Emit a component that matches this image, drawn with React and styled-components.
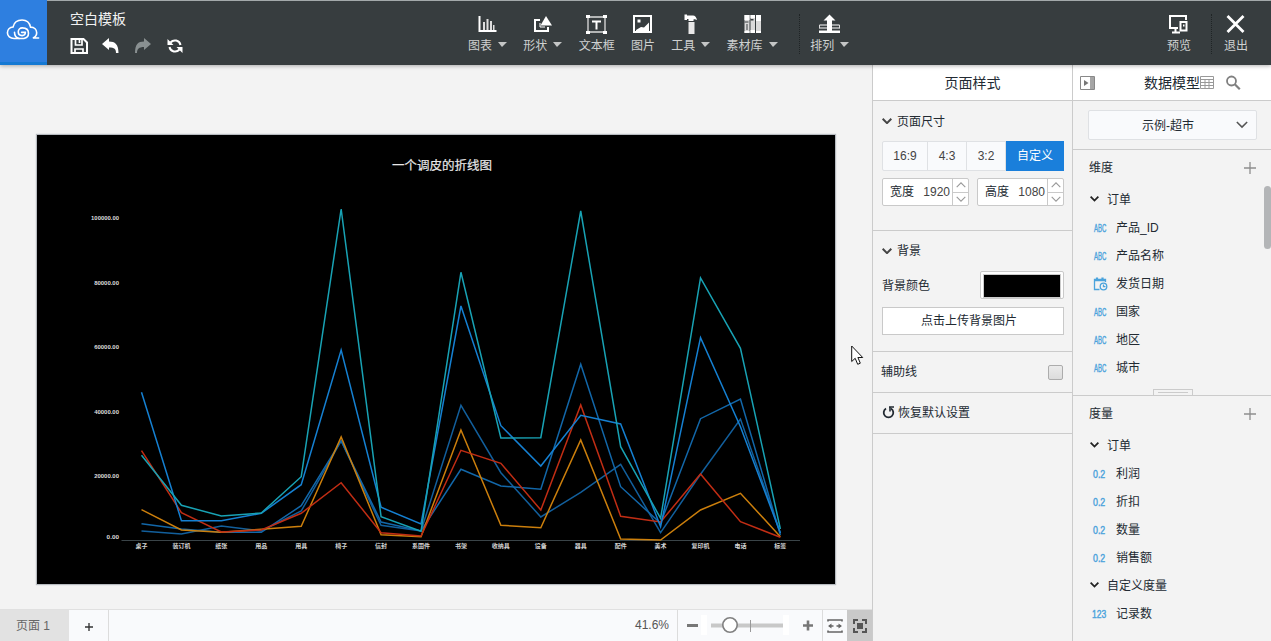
import React from "react";
import styled, { createGlobalStyle } from "styled-components";

const GlobalStyle = createGlobalStyle`
  * {
    box-sizing: border-box;
  }
  body {
    margin: 0;
    overflow: hidden;
    font-family: "Liberation Sans", "Noto Sans CJK SC", sans-serif;
    font-size: 12px;
    color: #222a32;
  }
  svg {
    display: block;
    flex: none;
  }
`;

// Layout
const Page = styled.div`
  display: flex;
  flex-direction: column;
  width: 1271px;
  height: 641px;
  background-color: #f3f3f3;
`;

const Header = styled.header`
  position: relative;
  z-index: 2;
  display: flex;
  flex: none;
  height: 65px;
  background-color: #373d3f;
  border-top: 1px solid #a3a9aa;
  box-shadow: 0 1px 4px rgba(0, 0, 0, 0.3);
`;

const Logo = styled.div`
  display: flex;
  align-items: center;
  justify-content: center;
  width: 47px;
  height: 65px;
  margin-top: -1px;
  padding: 0 2px 3px 0;
  background-color: #2e7fe0;
  border-bottom: 3px solid #1579d3;
`;

const TitleBlock = styled.div`
  width: 421px;
  padding: 8px 0 0 23px;
`;

const Title = styled.div`
  height: 20px;
  line-height: 20px;
  font-size: 14px;
  color: #f2f2f2;
`;

const QuickActions = styled.div`
  display: flex;
  gap: 14px;
  margin-top: 8px;
`;

const Toolbar = styled.nav`
  display: flex;
  flex: 1;
  gap: 16.3px;
  padding-top: 13px;
`;

const Tool = styled.div`
  display: flex;
  flex-direction: column;
  align-items: center;
  height: 40px;
`;

const ToolLabel = styled.div`
  display: flex;
  align-items: center;
  gap: 6px;
  height: 18px;
  margin-top: 3px;
  line-height: 18px;
  color: #cfd1d1;
  white-space: nowrap;
`;

const Caret = styled.span`
  border: 5px solid transparent;
  border-left-width: 4px;
  border-top-color: #c4c6c6;
  border-bottom: 0;
  margin-bottom: 4px;
`;

const Separator = styled.div`
  height: 40px;
  border-left: 1px dotted #1f2425;
  margin: 0 ${(p) => p.$right || 0}px 0 ${(p) => p.$left || 0}px;
`;

const HeaderRight = styled.div`
  display: flex;
  padding: 13px 23px 0 0;
`;

const Main = styled.main`
  display: flex;
  flex: 1;
  min-height: 0;
`;

const Workspace = styled.section`
  display: flex;
  flex-direction: column;
  width: 872px;
`;

const Stage = styled.div`
  flex: 1;
  padding: 70px 0 0 37px;
`;

const Canvas = styled.div`
  width: 798px;
  height: 449px;
  background-color: #000;
  box-shadow: 0 0 1px 1px rgba(110, 120, 130, 0.45);
`;

const Pointer = styled.div`
  position: absolute;
  left: 851px;
  top: 345px;
`;

// Footer
const Footer = styled.footer`
  display: flex;
  flex: none;
  height: 32px;
  border-top: 1px solid #e0e0e0;
  background-color: #f9fafc;
`;

const PageTab = styled.div`
  width: 69px;
  padding-left: 16px;
  line-height: 32px;
  background-color: #e2e2e2;
  color: #666;
`;

const AddTab = styled.div`
  display: flex;
  align-items: center;
  justify-content: center;
  width: 40px;
  padding-top: 3px;
  border-right: 1px solid #dcdcdc;
`;

const ZoomText = styled.div`
  margin-left: auto;
  padding-right: 8px;
  line-height: 31px;
  color: #555;
`;

const ZoomControl = styled.div`
  display: flex;
  align-items: center;
  width: 146px;
  border: 1px solid #dcdcdc;
  border-width: 0 1px;
`;

const FooterButton = styled.div`
  display: flex;
  align-items: center;
  justify-content: center;
  width: ${(p) => p.$width}px;
  background-color: ${(p) => (p.$active ? "#c9c9c9" : "transparent")};
`;

// Side panels
const Panel = styled.aside`
  position: relative;
  width: ${(p) => p.$width}px;
  border-left: 1px solid #cbcbcb;
`;

const PanelHeader = styled.div`
  display: flex;
  align-items: center;
  height: 36px;
  padding: ${(p) => (p.$center ? "1px 0 0" : "1px 0 0 7px")};
  justify-content: ${(p) => (p.$center ? "center" : "flex-start")};
  background-color: #fff;
  border-bottom: 1px solid #cbcbcb;
  font-size: 14px;
`;

const Text = styled.span`
  padding-bottom: ${(p) => p.$lift || 2}px;
  white-space: nowrap;
`;

const ModelTitle = styled(Text)`
  margin: 0 0 0 49px;
`;

const Group = styled.div`
  height: ${(p) => p.$height}px;
  padding: 10px 8px 0 9px;
  border-bottom: 1px solid #cbcbcb;
`;

const GroupTitle = styled.div`
  display: flex;
  align-items: center;
  gap: 5px;
  height: 20px;
`;

const RatioGroup = styled.div`
  display: flex;
  height: 30px;
  margin-top: 10px;
  border: 1px solid #dfe1e4;
  border-radius: 2px;
  background-color: #f9fafc;
`;

const Ratio = styled.div`
  width: ${(p) => p.$width}px;
  line-height: 28px;
  text-align: center;
  color: #444;
  border-right: 1px solid #dfe1e4;
  &:last-child {
    margin: -1px -1px -1px 0;
    line-height: 30px;
    border: 0;
    background-color: #1a7fdb;
    color: #fff;
  }
`;

const SizeRow = styled.div`
  display: flex;
  justify-content: space-between;
  margin-top: 7px;
`;

const SizeInput = styled.div`
  display: flex;
  width: 87px;
  height: 28px;
  padding-left: 7px;
  line-height: 26px;
  background-color: #fff;
  border: 1px solid #c9c9c9;
  border-radius: 2px;
`;

const SizeValue = styled.span`
  margin-left: auto;
  padding-right: 2px;
  color: #444;
`;

const Spinner = styled.div`
  display: flex;
  flex-direction: column;
  width: 16px;
  border-left: 1px solid #c9c9c9;
`;

const SpinButton = styled.div`
  display: flex;
  flex: 1;
  align-items: center;
  justify-content: center;
  & + & {
    border-top: 1px solid #c9c9c9;
  }
`;

const ColorRow = styled.div`
  display: flex;
  align-items: center;
  justify-content: space-between;
  height: 28px;
  margin-top: 10px;
`;

const ColorSwatch = styled.div`
  width: 84px;
  height: 28px;
  padding: 2px;
  background: #fff;
  border: 1px solid #c9c9c9;
  border-radius: 2px;
  &::before {
    content: "";
    display: block;
    height: 22px;
    background-color: #000;
    border: 1px solid #ccc;
    background-clip: padding-box;
  }
`;

const UploadButton = styled.div`
  height: 28px;
  margin-top: 8px;
  padding-right: 8px;
  line-height: 27px;
  text-align: center;
  background-color: #fff;
  border: 1px solid #c9c9c9;
`;

const OptionRow = styled.div`
  display: flex;
  align-items: center;
  gap: 3px;
  height: 41px;
  padding: 0 9px 0 ${(p) => p.$left}px;
  border-bottom: 1px solid #cbcbcb;
`;

const Checkbox = styled.div`
  width: 15px;
  height: 15px;
  margin: 1px 0 0 auto;
  border: 1px solid #acacac;
  border-radius: 2px;
  background: linear-gradient(#ebebeb, #dcdcdc);
`;

const SelectArea = styled.div`
  height: 49px;
  padding: 9px 15px 0;
  border-bottom: 1px solid #cbcbcb;
`;

const Select = styled.div`
  display: flex;
  align-items: center;
  height: 30px;
  width: 169px;
  padding: 0 8px 0 53px;
  justify-content: space-between;
  background-color: #f9fafc;
  border: 1px solid #dfe1e4;
  border-radius: 2px;
`;

const FieldList = styled.div`
  height: ${(p) => p.$height || "auto"};
  border-bottom: ${(p) => (p.$height ? "1px solid #cbcbcb" : "0")};
`;

const FieldHeader = styled.div`
  display: flex;
  align-items: center;
  justify-content: space-between;
  height: 35px;
  padding: 0 15px 0 16px;
`;

const FolderRow = styled.div`
  display: flex;
  align-items: center;
  gap: 8px;
  height: 28px;
  padding-left: 17px;
`;

const FieldRow = styled.div`
  display: flex;
  align-items: center;
  height: 28px;
  padding-left: 20px;
`;

const FieldType = styled.div`
  width: 23px;
  padding-top: 2px;
  white-space: nowrap;
  font-size: 10px;
  color: #4ba3dc;
`;

const TypeText = styled.span`
  display: inline-block;
  transform: scaleX(${(p) => p.$scale || 1});
  transform-origin: left;
  margin-left: ${(p) => p.$shift || 0}px;
  -webkit-text-stroke: 0.4px currentColor;
`;

const DragHandle = styled.div`
  width: 40px;
  height: 6px;
  margin: 8px 0 0 80px;
  padding: 2px 4px;
  border: 1px solid #cbcbcb;
  border-bottom: 0;
  &::before {
    content: "";
    display: block;
    border-top: 1px solid #cbcbcb;
  }
`;

const ScrollThumb = styled.div`
  position: absolute;
  top: 121px;
  right: 0;
  width: 7px;
  height: 63px;
  border-radius: 4px;
  background-color: #b3b5b7;
`;

// Icons
const toolIcons = {
  chart: (
    <g fill="#fff">
      <path d="M1.500 2h2v14h16v2h-18z" />
      <path d="M6 8h2v8H6zM9.500 5h2v11h-2zM13 7h2v9h-2zM16 11h1.500v5H16z" fill="#ddd" />
    </g>
  ),
  shape: (
    <g>
      <path d="M8 6H3v11h13v-4" fill="none" stroke="#fff" strokeWidth="2" />
      <path d="M14 2l6 9.500H8.500z" fill="#fff" />
      <path d="M8 9v4h5" fill="none" stroke="#fff" strokeWidth="1" />
    </g>
  ),
  text: (
    <g>
      <path d="M2 3h17v15H2z" fill="none" stroke="#ddd" strokeWidth="1.300" />
      <path d="M0 1h4v3H0zM17 1h4v3h-4zM0 17h4v3H0zM17 17h4v3h-4z" fill="#fff" />
      <path d="M6 7.500h9M10.500 7v8.500" fill="none" stroke="#fff" strokeWidth="2" />
    </g>
  ),
  image: (
    <g>
      <path d="M2 2h17v16H2z" fill="none" stroke="#fff" strokeWidth="2" />
      <path d="M4 16l5-3 3 .5 5-5V17H4z" fill="#fff" />
      <path d="M5.500 5.500h3v3h-3z" fill="#fff" />
    </g>
  ),
  hammer: (
    <g fill="#fff">
      <path d="M4.500 .5h2.500v1h6c2 0 3.500 2 4 4.500-1.500-1-2.500-1-3.500-.5V7H8.500V5H7v1H4.500z" />
      <path d="M8.500 8h6v12h-6z" fill="#e8e8e8" />
    </g>
  ),
  library: (
    <g>
      <path d="M2.500 1h5v18h-5zM8.500 1h4.500v18H8.500zM14 1h5v18h-5z" fill="#dadada" />
      <path d="M2.500 1h5v5h-5zM8.500 1h4.500v3H8.500zM14 1h5v6h-5zM2.500 17h5v2h-5zM8.500 16h4.500v3H8.500zM14 17h5v2h-5z" fill="#fff" />
      <path d="M2.500 7.500h4v1h-4zM8.500 5h3v1.500h-3zM4.500 10h1v6h-1z" fill="#373d3f" />
    </g>
  ),
  arrange: (
    <g>
      <path d="M.5 11h20M.5 14h20" fill="none" stroke="#fff" strokeWidth="1.200" />
      <path d="M.5 11v3.500M20.500 11v3.500" stroke="#ddd" />
      <path d="M10.500 .5l6 6H13V17H8V6.500H4.500z" fill="#fff" />
      <path d="M0 16.500h21v2.500H0z" fill="#fff" />
    </g>
  ),
  preview: (
    <g fill="none" stroke="#fff" strokeWidth="2">
      <path d="M18 6V2H2v12h8M7.500 14v4M4 18.500h8" />
      <path d="M12.500 8h6v8.500h-6z" />
      <path d="M15 11.500h1.500" strokeWidth="2" />
    </g>
  ),
  exit: <path d="M2.500 2l16 16M18.500 2l-16 16" stroke="#fff" strokeWidth="2.800" fill="none" />,
};

const ToolIcon = ({ name }) => (
  <svg width="21" height="20" viewBox="0 0 21 20">
    {toolIcons[name]}
  </svg>
);

const LogoIcon = () => (
  <svg width="34" height="23" viewBox="0 0 36 24" fill="none" stroke="#fff" strokeWidth="1.700" strokeLinecap="round">
    <path d="M14 21.500H8.500C4.500 21.500 1.500 19 1.500 15.500c0-3.500 2.500-6 6-6.200C8.500 4.500 12.500 2 17 2s8 3 9 7.500c4 0 6.500 2.800 6.500 6 0 3-1.500 4.500-4 5.500h6" />
    <path d="M16.500 15h4c0 2.300-1.500 3.500-3.500 3.500-2.500 0-4-1.700-4-4 0-2.500 1.800-4.200 4.300-4.200 4 0 6.500 2.200 6.500 5.700 0 3.200-2 5-4.800 5.500H14c-3-.5-5-3-5-6.500" />
  </svg>
);

const Chevron = ({ size = 10, color = "#444", width = 2, up }) => (
  <svg width={size} height={size * 0.6} viewBox="0 0 10 6" fill="none" stroke={color} strokeWidth={width}>
    <path d={up ? "M.7 5.200L5 .9l4.300 4.300" : "M.7.8L5 5.100 9.300.8"} />
  </svg>
);

const PlusIcon = ({ size = 12, color = "#8e8e8e", width = 1.3 }) => (
  <svg width={size} height={size} viewBox="0 0 12 12" stroke={color} strokeWidth={width}>
    <path d="M6 0v12M0 6h12" />
  </svg>
);

const CalendarIcon = () => (
  <svg width="15" height="14" viewBox="0 0 15 14" fill="none" stroke="#4ba3dc" strokeWidth="1.300">
    <path d="M6.500 12.500H1.500v-10h11V5" />
    <path d="M1 3.200h12M4 .5v3M9.500 .5v3" strokeWidth="2.200" />
    <circle cx="10.500" cy="9.500" r="3.300" />
    <path d="M10.500 7.500v2.200h2" />
  </svg>
);

const tools = [
  { icon: "chart", label: "图表", menu: true },
  { icon: "shape", label: "形状", menu: true },
  { icon: "text", label: "文本框" },
  { icon: "image", label: "图片" },
  { icon: "hammer", label: "工具", menu: true },
  { icon: "library", label: "素材库", menu: true },
];

const dimensions = [
  { type: "abc", name: "产品_ID" },
  { type: "abc", name: "产品名称" },
  { type: "date", name: "发货日期" },
  { type: "abc", name: "国家" },
  { type: "abc", name: "地区" },
  { type: "abc", name: "城市" },
];

const measures = ["利润", "折扣", "数量", "销售额"];

// Line chart
const categories = [
  "桌子", "装订机", "纸张", "用品", "用具", "椅子", "信封", "系固件", "书架",
  "收纳具", "设备", "器具", "配件", "美术", "复印机", "电话", "标签",
];

const series = [
  { color: "#125f9c", points: [396, 399, 391, 396, 376, 306, 390.3, 396, 270.3, 337.7, 382, 357.3, 329.3, 397.7, 339.3, 284, 398] },
  { color: "#1267a9", points: [388.7, 394, 397.3, 397.3, 370.7, 305.7, 387, 396, 334.3, 351, 354.3, 229.3, 351.7, 388.3, 283.7, 264, 400] },
  { color: "#cc7f0c", points: [374.7, 395, 397.3, 394.3, 391.3, 302, 399.7, 401.7, 295, 390.3, 392.7, 305, 404, 405, 375, 358.3, 401.7] },
  { color: "#c12d14", points: [315.7, 377.7, 397, 395, 378.3, 347.7, 397.7, 401, 315.3, 328.3, 375, 270, 381.3, 387, 339, 386.7, 402.3] },
  { color: "#1580d2", points: [257.3, 385.7, 385.7, 378.3, 349.7, 215, 372.3, 389, 171, 290.7, 331, 280.3, 289, 391.7, 202.7, 291.7, 398] },
  { color: "#18a2b4", points: [320.3, 370.3, 381, 378, 341.7, 74, 381.7, 396.3, 137.3, 303, 302.7, 76, 311.7, 383.3, 143, 213.3, 394] },
];

const ticks = [
  { label: "100000.00", y: 82.5 },
  { label: "80000.00", y: 147.5 },
  { label: "60000.00", y: 211.5 },
  { label: "40000.00", y: 276.5 },
  { label: "20000.00", y: 340.5 },
  { label: "0.00", y: 401.5 },
];

const xAt = (i) => 104.5 + i * 39.93;

const LineChart = () => (
  <svg width="798" height="449" viewBox="0 0 798 449">
    <text x="405" y="35" fontSize="12.500" fill="#e8e8e8" stroke="#e8e8e8" strokeWidth="0.200" textAnchor="middle">
      一个调皮的折线图
    </text>
    {ticks.map((t) => (
      <text key={t.label} x="82" y={t.y + 2} fontSize="6" fontWeight="bold" fill="#dedede" textAnchor="end" textLength={t.label.length * 3.1} lengthAdjust="spacingAndGlyphs">
        {t.label}
      </text>
    ))}
    <path d="M84.500 405.500H763" stroke="#3a4448" strokeWidth="1.200" />
    {series.map((s) => (
      <polyline key={s.color} points={s.points.map((y, i) => `${xAt(i)},${y}`).join(" ")} fill="none" stroke={s.color} strokeWidth="1.500" />
    ))}
    {categories.map((c, i) => (
      <text key={c} x={xAt(i)} y="413" fontSize="6" fontWeight="bold" fill="#d4d4d4" textAnchor="middle">
        {c}
      </text>
    ))}
  </svg>
);

const SizeField = ({ label, value }) => (
  <SizeInput>
    {label}
    <SizeValue>{value}</SizeValue>
    <Spinner>
      <SpinButton>
        <Chevron up color="#999" width={1.1} />
      </SpinButton>
      <SpinButton>
        <Chevron color="#999" width={1.1} />
      </SpinButton>
    </Spinner>
  </SizeInput>
);

const Folder = ({ name }) => (
  <FolderRow>
    <Chevron size={9} color="#222" />
    <Text>{name}</Text>
  </FolderRow>
);

const App = () => {
  return (
    <Page>
      <GlobalStyle />
      <Header>
        <Logo>
          <LogoIcon />
        </Logo>
        <TitleBlock>
          <Title>空白模板</Title>
          <QuickActions>
            <svg width="18" height="18" viewBox="0 0 18 18">
              <path d="M1.500 2h12L17 5.500V16H1.500z" fill="none" stroke="#fff" strokeWidth="2" />
              <path d="M5.500 2v6h6.500V2M5 16v-4h8v4M9.500 3v3" fill="none" stroke="#fff" strokeWidth="1.700" />
            </svg>
            <svg width="18" height="18" viewBox="0 0 18 18">
              <path d="M0 7l7-6v3.500c6 0 9.500 2.500 9.500 11.500h-2.500c0-4-1.500-5.500-7-5.500V13z" fill="#fff" />
            </svg>
            <svg width="18" height="18" viewBox="0 0 18 18">
              <path d="M17 7l-7-6v3.500C4 4.500 1 7 1 16h2c0-4 2-6 7-6V13z" fill="#899091" />
            </svg>
            <svg width="18" height="18" viewBox="0 0 18 18">
              <path d="M4.500 5.500c3-3.500 9-2.500 10 2.500M13.500 12.500c-3 3.500-9 2.500-10-2.500" fill="none" stroke="#fff" strokeWidth="2" />
              <path d="M1.500 2v6h6zM16.500 16v-6h-6z" fill="#fff" />
            </svg>
          </QuickActions>
        </TitleBlock>
        <Toolbar>
          {tools.map((t) => (
            <Tool key={t.icon}>
              <ToolIcon name={t.icon} />
              <ToolLabel>
                {t.label}
                {t.menu && <Caret />}
              </ToolLabel>
            </Tool>
          ))}
          <Separator $left={5} $right={-6} />
          <Tool>
            <ToolIcon name="arrange" />
            <ToolLabel>
              排列
              <Caret />
            </ToolLabel>
          </Tool>
        </Toolbar>
        <HeaderRight>
          <Tool>
            <ToolIcon name="preview" />
            <ToolLabel>预览</ToolLabel>
          </Tool>
          <Separator $left={20} $right={12} />
          <Tool>
            <ToolIcon name="exit" />
            <ToolLabel>退出</ToolLabel>
          </Tool>
        </HeaderRight>
      </Header>

      <Main>
        <Workspace>
          <Stage>
            <Canvas>
              <LineChart />
            </Canvas>
          </Stage>
          <Footer>
            <PageTab>页面 1</PageTab>
            <AddTab>
              <PlusIcon size={8} color="#333" width={2} />
            </AddTab>
            <ZoomText>41.6%</ZoomText>
            <ZoomControl>
              <svg width="144" height="30" viewBox="0 0 144 30">
                <path d="M23 4h6v20h-6zM105 4h6v20h-6z" fill="#fff" />
                <path d="M9 14.500h11" stroke="#777" strokeWidth="3" />
                <path d="M33 14.500h72" stroke="#c8c8c8" strokeWidth="4" />
                <path d="M72.500 9v12" stroke="#999" />
                <circle cx="52" cy="14" r="7.200" fill="#fff" stroke="#808080" strokeWidth="1.600" />
                <path d="M125 14.500h10M130 9.500v10" stroke="#777" strokeWidth="2.600" />
              </svg>
            </ZoomControl>
            <FooterButton $width={24}>
              <svg width="16" height="16" viewBox="0 0 16 16" fill="none" stroke="#666" strokeWidth="1.600">
                <path d="M1 3.500V2h14v1.500M1 12.500V14h14v-1.500" />
                <path d="M2 8h4.500M9.500 8H14" />
                <path d="M4.500 5.500L1 8l3.500 2.500zM11.500 5.500L15 8l-3.500 2.500z" fill="#666" stroke="none" />
              </svg>
            </FooterButton>
            <FooterButton $width={25} $active>
              <svg width="16" height="16" viewBox="0 0 16 16" fill="none" stroke="#555" strokeWidth="2">
                <path d="M2 6V2h4M10 2h4v4M14 10v4h-4M6 14H2v-4" />
                <path d="M5 5h6v6H5z" fill="#555" stroke="none" />
              </svg>
            </FooterButton>
          </Footer>
        </Workspace>

        <Panel $width={200}>
          <PanelHeader $center>
            <Text>页面样式</Text>
          </PanelHeader>
          <Group $height={130}>
            <GroupTitle>
              <Chevron />
              <Text>页面尺寸</Text>
            </GroupTitle>
            <RatioGroup>
              <Ratio $width={45}>16:9</Ratio>
              <Ratio $width={39}>4:3</Ratio>
              <Ratio $width={39}>3:2</Ratio>
              <Ratio $width={58}>自定义</Ratio>
            </RatioGroup>
            <SizeRow>
              <SizeField label="宽度" value="1920" />
              <SizeField label="高度" value="1080" />
            </SizeRow>
          </Group>
          <Group $height={121}>
            <GroupTitle>
              <Chevron />
              <Text $lift={3}>背景</Text>
            </GroupTitle>
            <ColorRow>
              <Text>背景颜色</Text>
              <ColorSwatch />
            </ColorRow>
            <UploadButton>点击上传背景图片</UploadButton>
          </Group>
          <OptionRow $left={8}>
            <Text $lift={4}>辅助线</Text>
            <Checkbox />
          </OptionRow>
          <OptionRow $left={9}>
            <svg width="13" height="15" viewBox="0 0 13 15" fill="none" stroke="#222a32" strokeWidth="1.800">
              <path d="M4 2.500a4.800 4.800 0 1 0 5 0" />
              <path d="M7 1h5M8 1v4.500" strokeWidth="1.600" />
            </svg>
            <Text $lift={4}>恢复默认设置</Text>
          </OptionRow>
        </Panel>

        <Panel $width={199}>
          <PanelHeader>
            <svg width="15" height="15" viewBox="0 0 15 15" fill="none" stroke="#888">
              <path d="M.5.5h14v13H.5z" />
              <path d="M11 1v12M13 1v12" strokeWidth="1.500" />
              <path d="M4 4l4.500 3L4 10z" fill="#777" stroke="none" />
            </svg>
            <ModelTitle>数据模型</ModelTitle>
            <svg width="14" height="14" viewBox="0 0 14 14" fill="none" stroke="#999">
              <path d="M.5.5h13v12H.5zM.5 3.500h13M.5 6.500h13M.5 9.500h13M5 3.500v9M9 3.500v9" />
            </svg>
            <svg width="28" height="16" viewBox="-12 0 28 16" fill="none" stroke="#808080" strokeWidth="1.800">
              <circle cx="5.500" cy="6" r="4.500" />
              <path d="M8.800 9.200l5 5" strokeWidth="2.200" />
            </svg>
          </PanelHeader>
          <SelectArea>
            <Select>
              <Text>示例-超市</Text>
              <Chevron size={12} width={1.3} color="#555" />
            </Select>
          </SelectArea>
          <FieldList $height="246px">
            <FieldHeader>
              <Text>维度</Text>
              <PlusIcon />
            </FieldHeader>
            <Folder name="订单" />
            {dimensions.map((d) => (
              <FieldRow key={d.name}>
                <FieldType>
                  {d.type === "date" ? <CalendarIcon /> : <TypeText $scale={0.6} $shift={0.5}>ABC</TypeText>}
                </FieldType>
                <Text>{d.name}</Text>
              </FieldRow>
            ))}
            <DragHandle />
          </FieldList>
          <FieldList>
            <FieldHeader>
              <Text>度量</Text>
              <PlusIcon />
            </FieldHeader>
            <Folder name="订单" />
            {measures.map((m) => (
              <FieldRow key={m}>
                <FieldType>
                  <TypeText $scale={0.88}>0.2</TypeText>
                </FieldType>
                <Text>{m}</Text>
              </FieldRow>
            ))}
            <Folder name="自定义度量" />
            <FieldRow>
              <FieldType>
                <TypeText $scale={0.85} $shift={-1}>123</TypeText>
              </FieldType>
              <Text>记录数</Text>
            </FieldRow>
          </FieldList>
          <ScrollThumb />
        </Panel>
      </Main>

      <Pointer>
        <svg width="13" height="21" viewBox="0 0 13 21">
          <path d="M.7 1v15.500l3.500-3.200 2.500 6 2.600-1.100L6.900 12.500h4.800z" fill="#fff" stroke="#111" />
        </svg>
      </Pointer>
    </Page>
  );
};

export default App;
